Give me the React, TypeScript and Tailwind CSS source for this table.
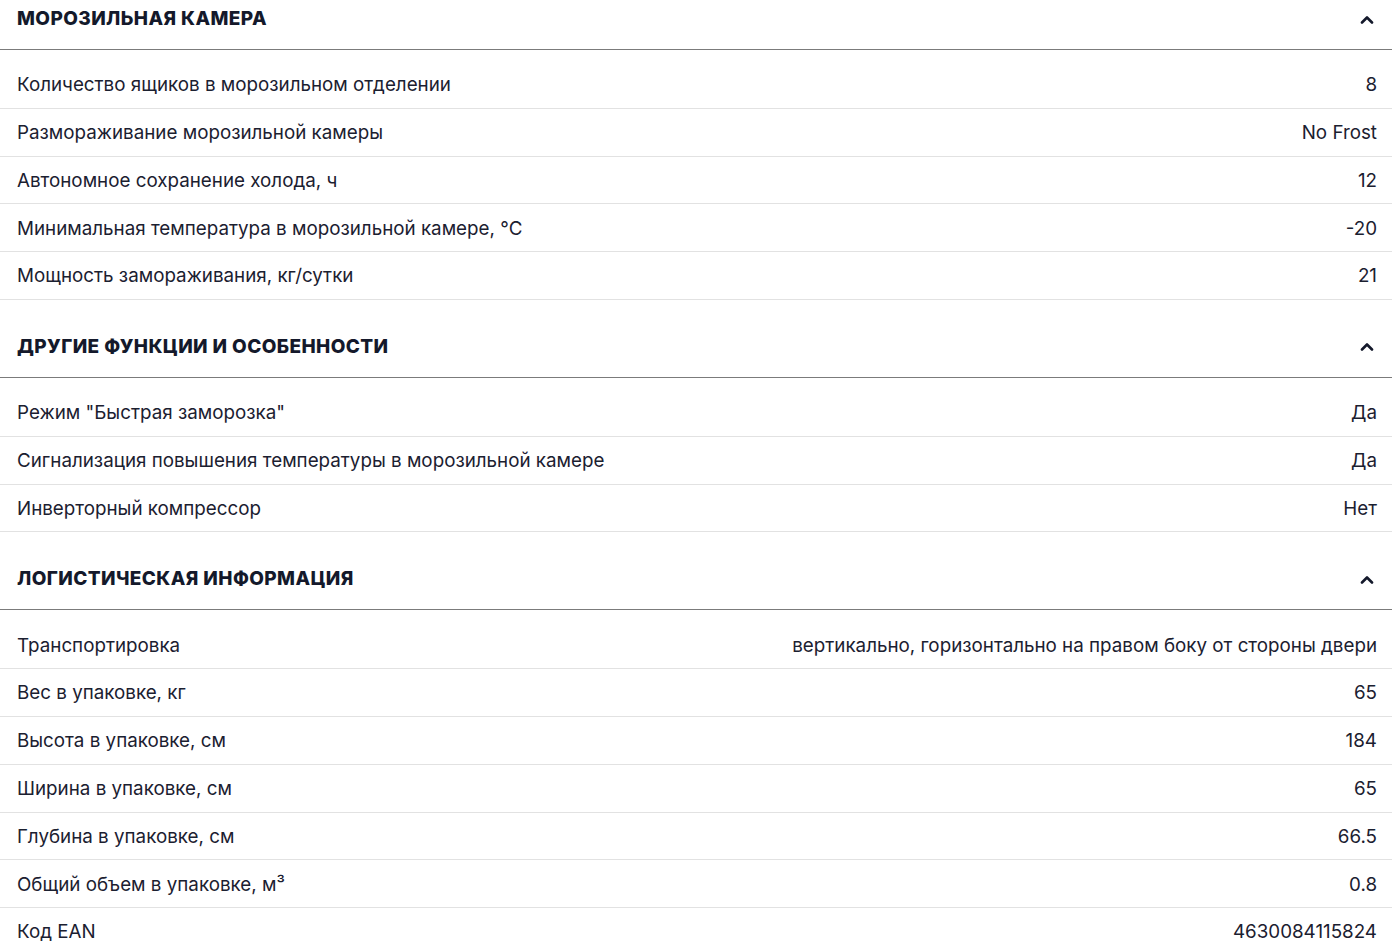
import React from "react";

type Section = { title: string; rows: [string, React.ReactNode][] };

const sections: Section[] = [
  {
    title: "Морозильная камера",
    rows: [
      ["Количество ящиков в морозильном отделении", "8"],
      ["Размораживание морозильной камеры", "No Frost"],
      ["Автономное сохранение холода, ч", "12"],
      ["Минимальная температура в морозильной камере, °C", "-20"],
      ["Мощность замораживания, кг/сутки", "21"],
    ],
  },
  {
    title: "Другие функции и особенности",
    rows: [
      ["Режим \"Быстрая заморозка\"", "Да"],
      ["Сигнализация повышения температуры в морозильной камере", "Да"],
      ["Инверторный компрессор", "Нет"],
    ],
  },
  {
    title: "Логистическая информация",
    rows: [
      ["Транспортировка", "вертикально, горизонтально на правом боку от стороны двери"],
      ["Вес в упаковке, кг", "65"],
      ["Высота в упаковке, см", "184"],
      ["Ширина в упаковке, см", "65"],
      ["Глубина в упаковке, см", "66.5"],
      ["Общий объем в упаковке, м³", "0.8"],
      ["Код EAN", "4630084115824"],
    ],
  },
];

function Chevron() {
  return (
    <svg width="14" height="9" viewBox="0 0 14 9" className="shrink-0">
      <path d="M2 7.5 L7 2.5 L12 7.5" fill="none" stroke="#14192b" strokeWidth="2.6" strokeLinecap="round" strokeLinejoin="round" />
    </svg>
  );
}

export default function App() {
  return (
    <div
      className="w-[1392px] h-[952px] overflow-hidden bg-white text-[#1b2030]"
      style={{ fontFamily: "Inter, 'Noto Sans', sans-serif" }}
    >
      {sections.map((s, i) => (
        <section key={s.title} className={i === 0 ? "" : "mt-[28px]"}>
          <div className="flex items-center justify-between h-[50px] pb-[11px] border-b border-[#7b7b7b] pl-[17px] pr-[18px]">
            <div className="text-[19px] font-extrabold uppercase tracking-[0.4px] text-[#14192b]">{s.title}</div>
            <Chevron />
          </div>
          <div className="pt-[11px]">
            {s.rows.map(([k, v]) => (
              <div
                key={k}
                className="flex items-center justify-between h-[47.8px] pt-[2px] border-b border-[#e2e2e2] pl-[17px] pr-[15px] text-[18.8px]"
              >
                <span>{k}</span>
                <span>{v}</span>
              </div>
            ))}
          </div>
        </section>
      ))}
    </div>
  );
}
